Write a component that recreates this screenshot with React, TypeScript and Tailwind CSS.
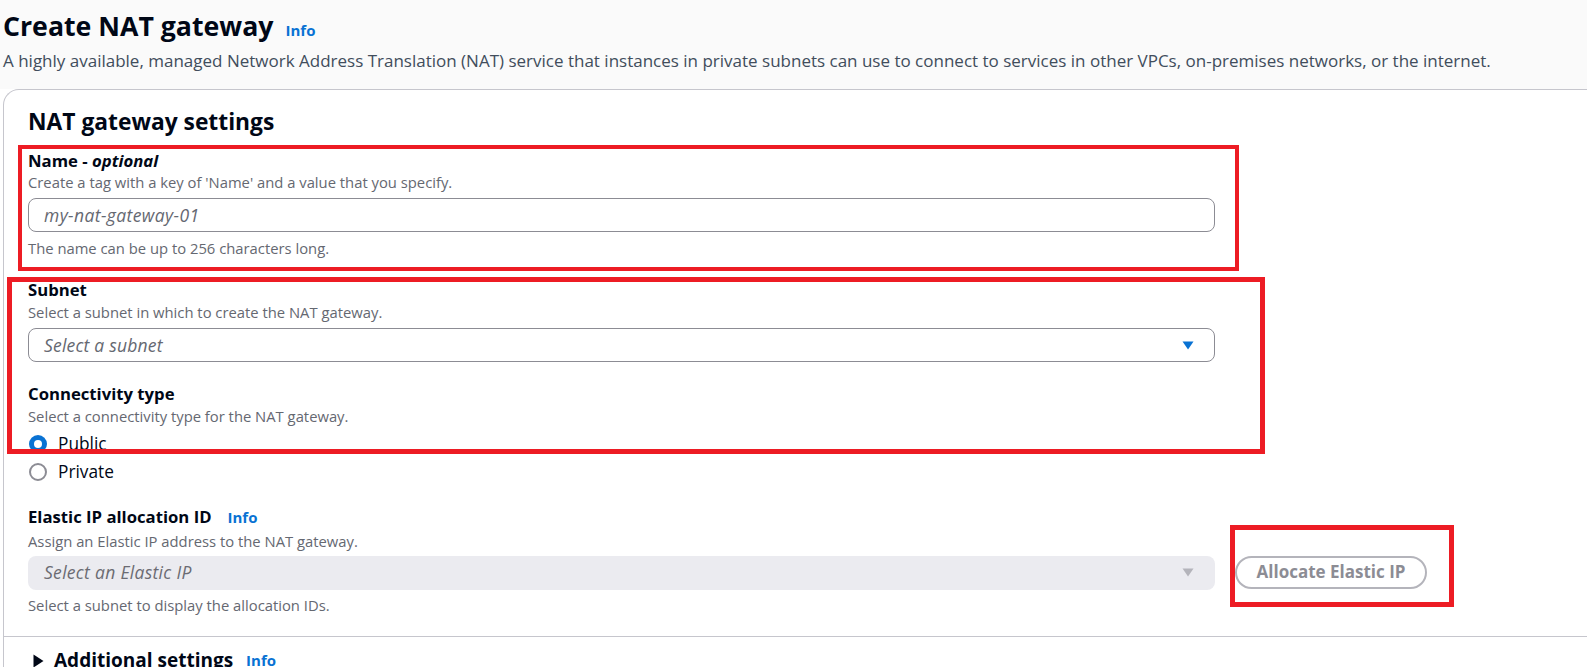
import React from 'react';

function Caret({ color }: { color: string }) {
  return (
    <svg width="12" height="9" viewBox="0 0 12 9" className="shrink-0">
      <path d="M0.5 0.5h11L6 8.5z" fill={color} />
    </svg>
  );
}

function Label({ children }: { children: React.ReactNode }) {
  return <div className="text-[16.7px] leading-[22px] font-bold text-[#000716]">{children}</div>;
}

function Hint({ children, className = '' }: { children: React.ReactNode; className?: string }) {
  return <div className={`text-[14.8px] leading-[20px] text-[#656871] ${className}`}>{children}</div>;
}

function Radio({ checked, label }: { checked?: boolean; label: string }) {
  return (
    <div className="flex items-center h-[28px] pl-[1px] gap-[11px]">
      {checked ? (
        <span className="w-[18px] h-[18px] rounded-full bg-[#0972d3] flex items-center justify-center">
          <span className="w-[8px] h-[8px] rounded-full bg-white" />
        </span>
      ) : (
        <span className="w-[18px] h-[18px] rounded-full border-2 border-[#8c8c94] bg-white" />
      )}
      <span className="text-[17.3px] text-[#000716]">{label}</span>
    </div>
  );
}

export default function App() {
  return (
    <div className="relative min-h-screen overflow-hidden bg-white font-['Open_Sans',sans-serif] text-[#000716]">
      {/* page header */}
      <div className="bg-[#fafafa] pl-[3px] pt-2 pb-[17px]">
        <div className="flex items-baseline gap-3">
          <h1 className="text-[26.7px] leading-[36px] font-bold">Create NAT gateway</h1>
          <span className="text-[15px] font-bold text-[#0972d3]">Info</span>
        </div>
        <p className="mt-[6px] text-[17px] leading-[22px] text-[#414d5c]">
          A highly available, managed Network Address Translation (NAT) service that instances in private subnets can use to connect to services in other VPCs, on-premises networks, or the internet.
        </p>
      </div>

      {/* settings card */}
      <div className="ml-[3px] mr-[-40px] border-l border-t border-[#c6c6cd] rounded-tl-[16px] bg-white">
        <div className="pl-6 pt-[17px] pb-[21px]">
          <h2 className="text-[22.8px] leading-[30px] font-bold">NAT gateway settings</h2>

          <div className="w-[1187px]">
            {/* Name */}
            <div className="mt-[13px]">
              <Label>
                Name - <i>optional</i>
              </Label>
              <Hint>Create a tag with a key of 'Name' and a value that you specify.</Hint>
              <div className="mt-[6px] h-[34px] rounded-[8px] border border-[#8c8c94] pl-[15px] flex items-center">
                <span className="text-[17.5px] italic tracking-[0.4px] text-[#656871]">my-nat-gateway-01</span>
              </div>
              <Hint className="mt-[6px]">The name can be up to 256 characters long.</Hint>
            </div>

            {/* Subnet */}
            <div className="mt-[21px]">
              <Label>Subnet</Label>
              <Hint className="mt-[1px]">Select a subnet in which to create the NAT gateway.</Hint>
              <div className="mt-[6px] h-[34px] rounded-[8px] border border-[#8c8c94] pl-[15px] pr-[20px] flex items-center justify-between">
                <span className="text-[17.5px] italic tracking-[0.2px] text-[#656871]">Select a subnet</span>
                <Caret color="#0972d3" />
              </div>
            </div>

            {/* Connectivity type */}
            <div className="mt-[21px]">
              <Label>Connectivity type</Label>
              <Hint className="mt-[1px]">Select a connectivity type for the NAT gateway.</Hint>
              <div className="mt-[4px]">
                <Radio checked label="Public" />
                <Radio label="Private" />
              </div>
            </div>

            {/* Elastic IP */}
            <div className="mt-[20px]">
              <div className="flex items-baseline gap-4">
                <Label>Elastic IP allocation ID</Label>
                <span className="text-[15px] font-bold text-[#0972d3]">Info</span>
              </div>
              <Hint className="mt-[2px]">Assign an Elastic IP address to the NAT gateway.</Hint>
            </div>
          </div>

          <div className="mt-[5px] flex items-start gap-5">
            <div className="w-[1187px]">
              <div className="h-[34px] rounded-[8px] bg-[#ebebf0] pl-[16px] pr-[21px] flex items-center justify-between">
                <span className="text-[17.5px] italic tracking-[0.3px] text-[#6b6b73]">Select an Elastic IP</span>
                <Caret color="#b4b4bb" />
              </div>
              <Hint className="mt-[5px]">Select a subnet to display the allocation IDs.</Hint>
            </div>
            <button className="h-[33px] w-[192px] rounded-full border-2 border-[#b4b4bb] text-[17px] font-bold text-[#8c8c94]">
              Allocate Elastic IP
            </button>
          </div>
        </div>

        {/* Additional settings */}
        <div className="border-t border-[#c6c6cd] pl-[29px] pt-[10px] pb-4">
          <div className="flex items-center h-[28px]">
            <svg width="11" height="14" viewBox="0 0 11 14" className="mr-[10px]">
              <path d="M0.5 0.5v13l10-6.5z" fill="#000716" />
            </svg>
            <span className="text-[19px] font-bold">Additional settings</span>
            <span className="ml-[13px] text-[15px] font-bold text-[#0972d3]">Info</span>
          </div>
        </div>
      </div>

      {/* red annotation frames */}
      <div className="absolute left-[18px] top-[145px] w-[1221px] h-[126px] border-4 border-[#ed1c24] pointer-events-none" />
      <div className="absolute left-[7px] top-[277px] w-[1258px] h-[177px] border-[5px] border-[#ed1c24] pointer-events-none" />
      <div className="absolute left-[1230px] top-[525px] w-[224px] h-[82px] border-[5px] border-[#ed1c24] pointer-events-none" />
    </div>
  );
}
